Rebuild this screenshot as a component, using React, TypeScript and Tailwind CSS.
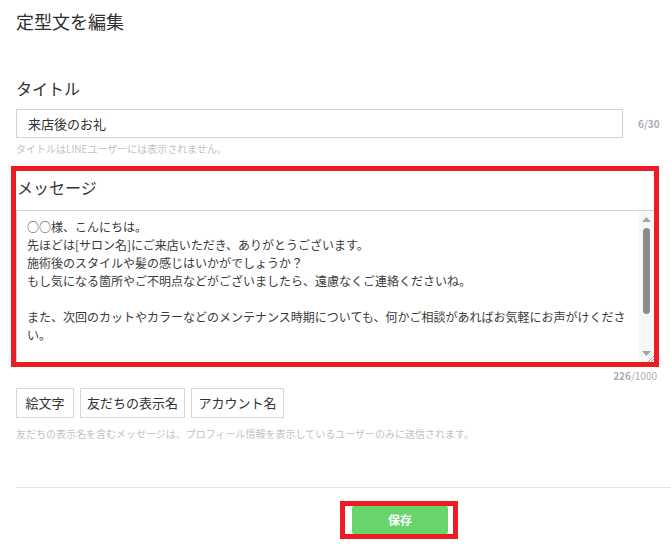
import React from 'react';

const messageLines = [
  '○○様、こんにちは。',
  '先ほどは[サロン名]にご来店いただき、ありがとうございます。',
  '施術後のスタイルや髪の感じはいかがでしょうか？',
  'もし気になる箇所やご不明点などがございましたら、遠慮なくご連絡くださいね。',
  '',
  'また、次回のカットやカラーなどのメンテナンス時期についても、何かご相談があればお気軽にお声がけください。',
];

const Scrollbar: React.FC = () => (
  <div className="w-[15px] shrink-0 bg-[#f7f7f7] flex flex-col items-center relative">
    <svg width="9" height="5" viewBox="0 0 9 5" className="mt-[6px]">
      <path d="M0 5 L4.5 0 L9 5 Z" fill="#a3a3a3" />
    </svg>
    <div className="mt-[6px] w-[7px] h-[86px] rounded-full bg-[#8c8c8c]" />
    <div className="flex-1" />
    <svg width="9" height="5" viewBox="0 0 9 5" className="mb-[6px]">
      <path d="M0 0 L4.5 5 L9 0 Z" fill="#a3a3a3" />
    </svg>
    {/* resize grip */}
    <svg width="6" height="6" viewBox="0 0 6 6" className="absolute right-0 bottom-0">
      <path d="M6 0 L0 6 M6 3 L3 6" stroke="#9a9a9a" strokeWidth="1" />
    </svg>
  </div>
);

const InsertButton: React.FC<{ label: string; width: string }> = ({ label, width }) => (
  <button
    type="button"
    className={`${width} h-[30px] border border-[#d6d6d6] bg-white text-[13px] text-[#333] flex items-center justify-center`}
  >
    {label}
  </button>
);

export default function App() {
  return (
    <div
      className="w-[671px] h-[544px] bg-white overflow-hidden text-[#333]"
      style={{ fontFamily: '"Noto Sans CJK JP", "Noto Sans", sans-serif' }}
    >
      <div className="pl-[16px] pt-[9px]">
        <h1 className="text-[18px] leading-[24px] font-normal text-[#2f2f2f]">定型文を編集</h1>

        {/* title field */}
        <div className="mt-[44px] text-[16px] leading-[22px]">タイトル</div>
        <div className="mt-[10px] flex items-center">
          <div className="w-[607px] h-[29px] border border-[#d2d2d2] flex items-center pl-[11px] text-[13px]">
            来店後のお礼
          </div>
          <span className="ml-[15px] text-[10px] text-[#a9aeb5] font-bold">6/30</span>
        </div>
        <p className="mt-[4px] text-[10px] leading-[14px] text-[#c2c2c2]">
          タイトルはLINEユーザーには表示されません。
        </p>

        {/* message field, highlighted */}
        <div className="mt-[10px] -ml-[5px] w-[648px] border-[5px] border-[#ed1c24]">
          <div className="pt-[5px] pl-[1px] text-[16px] leading-[22px]">メッセージ</div>
          <div className="mt-[12px] h-[152px] border-t border-l border-[#d2d2d2] flex">
            <div className="w-[622px] pl-[10px] pr-[6px] pt-[7px] text-[12px] leading-[18px] text-[#3a3a3a] overflow-hidden">
              {messageLines.map((line, i) => (
                <div key={i} className="min-h-[18px]">
                  {line}
                </div>
              ))}
            </div>
            <Scrollbar />
          </div>
        </div>
        <div className="pr-[14px] flex justify-end">
          <span className="mt-[3px] text-[10px] leading-[12px] text-[#a9aeb5]">
            <span className="font-bold">226</span>/1000
          </span>
        </div>

        {/* insert buttons */}
        <div className="mt-[6px] flex gap-[6px]">
          <InsertButton label="絵文字" width="w-[58px]" />
          <InsertButton label="友だちの表示名" width="w-[105px]" />
          <InsertButton label="アカウント名" width="w-[93px]" />
        </div>
        <p className="mt-[9px] text-[10px] leading-[14px] text-[#c2c2c2]">
          友だちの表示名を含むメッセージは、プロフィール情報を表示しているユーザーのみに送信されます。
        </p>

        <div className="mt-[46px] h-px bg-[#e4e4e4]" />

        {/* save */}
        <div className="mt-[13px] ml-[324px] w-[118px] h-[38px] border-[5px] border-[#ed1c24] pl-[7px]">
          <button
            type="button"
            className="w-[96px] h-[28px] rounded-[2px] bg-[#69d46a] text-white text-[12px] font-bold flex items-center justify-center"
          >
            保存
          </button>
        </div>
      </div>
    </div>
  );
}
